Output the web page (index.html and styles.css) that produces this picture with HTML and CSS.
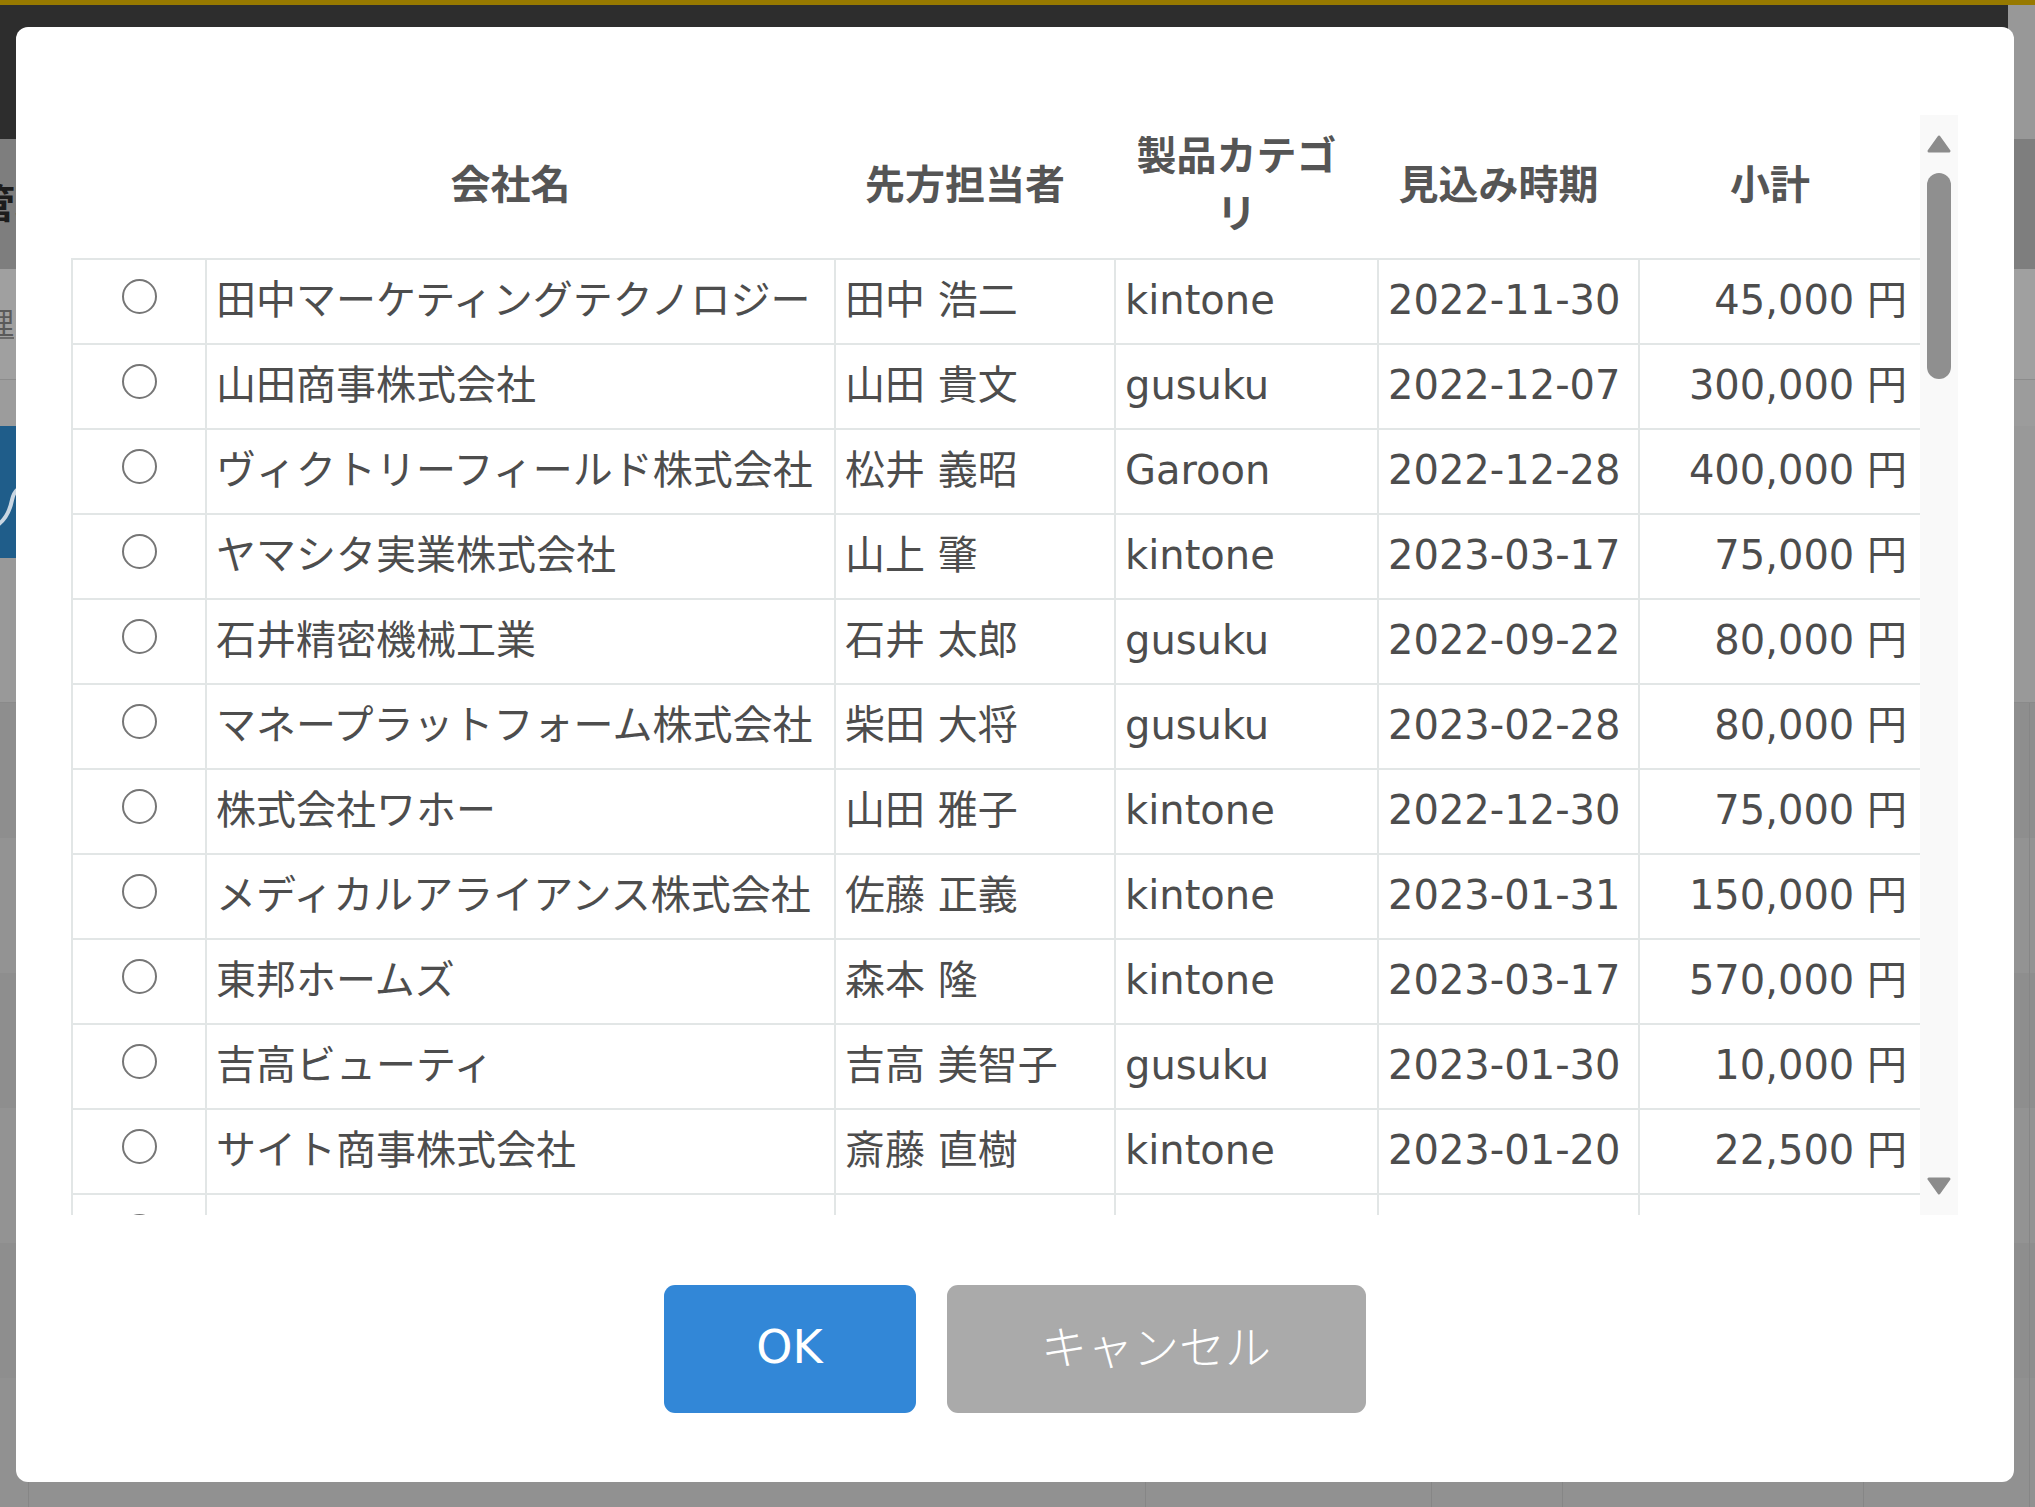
FILE: index.html
```html
<!DOCTYPE html>
<html lang="ja">
<head>
  <meta charset="UTF-8" />
  <meta name="viewport" content="width=device-width, initial-scale=1.0"/>
  <title>案件選択</title>
  <link rel="stylesheet" href="styles.css">
</head>
<body>
  <!-- page behind the dialog (dimmed) -->
  <div class="page">
    <div class="topline"></div>
    <div class="header-band">
      <div class="header-dark"></div>
      <div class="header-side"></div>
    </div>
    <div class="band band-title"><span class="title-text">管理</span></div>
    <div class="band band-sub"><span class="sub-text">理</span></div>
    <div class="band band-gap"></div>
    <div class="band band-banner">
      <div class="banner">
        <svg width="40" height="132" viewBox="0 0 40 132"><path d="M-4 100 C 6 94, 10 84, 12 74 C 14 64, 20 60, 30 58" fill="none" stroke="#c9d6e2" stroke-width="4" stroke-linecap="round"/></svg>
      </div>
    </div>
    <div class="band band-a"></div>
    <div class="row row-1"></div>
    <div class="row row-2"></div>
    <div class="row row-1"></div>
    <div class="row row-2"></div>
    <div class="row row-1"></div>
    <div class="row row-3"></div>
  </div>

  <div class="overlay">
    <div class="modal">
      <div class="scroll-area">
        <div class="table-viewport">
          <table class="deal-table">
            <colgroup>
              <col class="col-radio">
              <col class="col-company">
              <col class="col-person">
              <col class="col-category">
              <col class="col-date">
              <col class="col-amount">
            </colgroup>
            <thead>
              <tr>
                <th></th>
                <th>会社名</th>
                <th>先方担当者</th>
                <th>製品カテゴリ</th>
                <th>見込み時期</th>
                <th>小計</th>
              </tr>
            </thead>
            <tbody>
              <tr><td class="radio-cell"><input type="radio" name="deal"></td><td>田中マーケティングテクノロジー</td><td>田中 浩二</td><td>kintone</td><td>2022-11-30</td><td class="amount">45,000 円</td></tr>
              <tr><td class="radio-cell"><input type="radio" name="deal"></td><td>山田商事株式会社</td><td>山田 貴文</td><td>gusuku</td><td>2022-12-07</td><td class="amount">300,000 円</td></tr>
              <tr><td class="radio-cell"><input type="radio" name="deal"></td><td>ヴィクトリーフィールド株式会社</td><td>松井 義昭</td><td>Garoon</td><td>2022-12-28</td><td class="amount">400,000 円</td></tr>
              <tr><td class="radio-cell"><input type="radio" name="deal"></td><td>ヤマシタ実業株式会社</td><td>山上 肇</td><td>kintone</td><td>2023-03-17</td><td class="amount">75,000 円</td></tr>
              <tr><td class="radio-cell"><input type="radio" name="deal"></td><td>石井精密機械工業</td><td>石井 太郎</td><td>gusuku</td><td>2022-09-22</td><td class="amount">80,000 円</td></tr>
              <tr><td class="radio-cell"><input type="radio" name="deal"></td><td>マネープラットフォーム株式会社</td><td>柴田 大将</td><td>gusuku</td><td>2023-02-28</td><td class="amount">80,000 円</td></tr>
              <tr><td class="radio-cell"><input type="radio" name="deal"></td><td>株式会社ワホー</td><td>山田 雅子</td><td>kintone</td><td>2022-12-30</td><td class="amount">75,000 円</td></tr>
              <tr><td class="radio-cell"><input type="radio" name="deal"></td><td>メディカルアライアンス株式会社</td><td>佐藤 正義</td><td>kintone</td><td>2023-01-31</td><td class="amount">150,000 円</td></tr>
              <tr><td class="radio-cell"><input type="radio" name="deal"></td><td>東邦ホームズ</td><td>森本 隆</td><td>kintone</td><td>2023-03-17</td><td class="amount">570,000 円</td></tr>
              <tr><td class="radio-cell"><input type="radio" name="deal"></td><td>吉高ビューティ</td><td>吉高 美智子</td><td>gusuku</td><td>2023-01-30</td><td class="amount">10,000 円</td></tr>
              <tr><td class="radio-cell"><input type="radio" name="deal"></td><td>サイト商事株式会社</td><td>斎藤 直樹</td><td>kintone</td><td>2023-01-20</td><td class="amount">22,500 円</td></tr>
              <tr><td class="radio-cell"><input type="radio" name="deal"></td><td>北村システム株式会社</td><td>北村 修</td><td>Garoon</td><td>2023-02-15</td><td class="amount">120,000 円</td></tr>
            </tbody>
          </table>
        </div>
        <div class="scrollbar">
          <svg class="arrow" width="24" height="18" viewBox="0 0 24 18"><path d="M12 2 L22 16 H2 Z" fill="#8c8c8c" stroke="#8c8c8c" stroke-width="3" stroke-linejoin="round"/></svg>
          <div class="thumb"></div>
          <div class="track-rest"></div>
          <svg class="arrow" width="24" height="18" viewBox="0 0 24 18"><path d="M2 2 H22 L12 16 Z" fill="#8c8c8c" stroke="#8c8c8c" stroke-width="3" stroke-linejoin="round"/></svg>
        </div>
      </div>

      <div class="actions">
        <button type="button" class="btn btn-ok">OK</button>
        <button type="button" class="btn btn-cancel">キャンセル</button>
      </div>
    </div>
  </div>
</body>
</html>
```

FILE: styles.css
```css
body {
  margin: 0;
  padding: 0;
  overflow: hidden;
  font-family: "DejaVu Sans", "Noto Sans CJK JP", sans-serif;
}

/* background page, already dimmed by the overlay */
.page {
  display: flex;
  flex-direction: column;
  height: 100vh;
  background: #919191;
}

.topline {
  height: 5px;
  background: #977900;
}

.header-band {
  display: flex;
  height: 134px;
}

.header-dark {
  flex: 1;
  background: #2d2d2d;
}

.header-side {
  width: 27px;
  background: #989898;
}

.band {
  overflow: hidden;
  white-space: nowrap;
}

.band-title {
  height: 130px;
  background: #7e7e7e;
}

.title-text {
  display: inline-block;
  margin: 38px 0 0 -25px;
  font-family: "Noto Sans CJK JP", sans-serif;
  font-weight: 700;
  font-size: 40px;
  line-height: 48px;
  color: #1c1c1c;
}

.band-sub {
  height: 110px;
  background: #a0a0a0;
  border-bottom: 1px solid #8c8c8c;
}

.sub-text {
  display: inline-block;
  margin: 36px 0 0 -16px;
  font-family: "Noto Sans CJK JP", sans-serif;
  font-size: 30px;
  line-height: 32px;
  color: #5a5a5a;
  border-bottom: 2px solid #6a6a6a;
}

.band-gap {
  height: 46px;
  background: #9c9c9c;
}

.band-banner {
  height: 132px;
  background: #999999;
}

.banner {
  width: 320px;
  height: 100%;
  background: #1f5d8a;
}

.band-a {
  height: 144px;
  background: #999999;
  border-bottom: 1px solid #8a8a8a;
}

/* list rows with their column rules */
.row {
  height: 135px;
  background-image:
    linear-gradient(#868686, #868686),
    linear-gradient(#868686, #868686),
    linear-gradient(#868686, #868686),
    linear-gradient(#868686, #868686),
    linear-gradient(#868686, #868686),
    linear-gradient(#868686, #868686);
  background-size: 1px 100%;
  background-repeat: no-repeat;
  background-position: 28px 0, 1145px 0, 1431px 0, 1562px 0, 1863px 0, 2029px 0;
}

.row-1 { background-color: #8e8e8e; }
.row-2 { background-color: #939393; }
.row-3 { background-color: #919191; flex: 1; }

/* dialog */
.overlay {
  position: fixed;
  top: 0;
  left: 0;
  right: 0;
  bottom: 0;
  display: flex;
  align-items: flex-start;
  padding: 27px 0 0 16px;
}

.modal {
  width: 1998px;
  height: 1455px;
  box-sizing: border-box;
  padding: 88px 56px 0 55px;
  background: #ffffff;
  border-radius: 12px;
  display: flex;
  flex-direction: column;
}

.scroll-area {
  display: flex;
  height: 1100px;
}

.table-viewport {
  width: 1849px;
  overflow: hidden;
}

.deal-table {
  width: 1849px;
  table-layout: fixed;
  border-collapse: collapse;
  color: #4d4d4d;
}

.col-radio { width: 134px; }
.col-company { width: 629px; }
.col-person { width: 280px; }
.col-category { width: 263px; }
.col-date { width: 261px; }
.col-amount { width: 282px; }

.deal-table th {
  height: 144px;
  box-sizing: border-box;
  padding: 0 24px 10px 4px;
  font-family: "Noto Sans CJK JP", sans-serif;
  font-weight: 700;
  font-size: 40px;
  line-height: 58px;
  color: #555555;
  text-align: center;
  vertical-align: middle;
}

.deal-table td {
  height: 85px;
  box-sizing: border-box;
  padding: 0 4px 4px 9px;
  border: 2px solid #e2e6e6;
  font-size: 40px;
  line-height: 48px;
  white-space: nowrap;
  vertical-align: middle;
}

.deal-table td.amount {
  text-align: right;
  padding-right: 13px;
}

.deal-table td.radio-cell {
  padding: 0 0 10px 0;
}

.radio-cell input {
  appearance: none;
  display: block;
  width: 35px;
  height: 35px;
  margin: 0 auto;
  border: 2.5px solid #767676;
  border-radius: 50%;
  background: #ffffff;
}

.scrollbar {
  width: 38px;
  box-sizing: border-box;
  padding: 20px 0;
  background: #f9f9f9;
  display: flex;
  flex-direction: column;
  align-items: center;
}

.arrow {
  display: block;
  flex: none;
}

.thumb {
  width: 24px;
  height: 206px;
  margin-top: 20px;
  border-radius: 12px;
  background: #8f8f8f;
}

.track-rest {
  flex: 1;
}

.actions {
  display: flex;
  justify-content: center;
  gap: 31px;
  margin-top: 70px;
}

.btn {
  height: 128px;
  box-sizing: border-box;
  border: none;
  border-radius: 11px;
  color: #ffffff;
  font-family: "DejaVu Sans", "Noto Sans CJK JP", sans-serif;
  font-size: 46px;
  cursor: pointer;
}

.btn-ok {
  width: 252px;
  padding: 0 0 4px;
  background: #3287d7;
}

.btn-cancel {
  width: 419px;
  padding: 0 0 10px;
  font-weight: 300;
  background: #aaaaaa;
}
```
